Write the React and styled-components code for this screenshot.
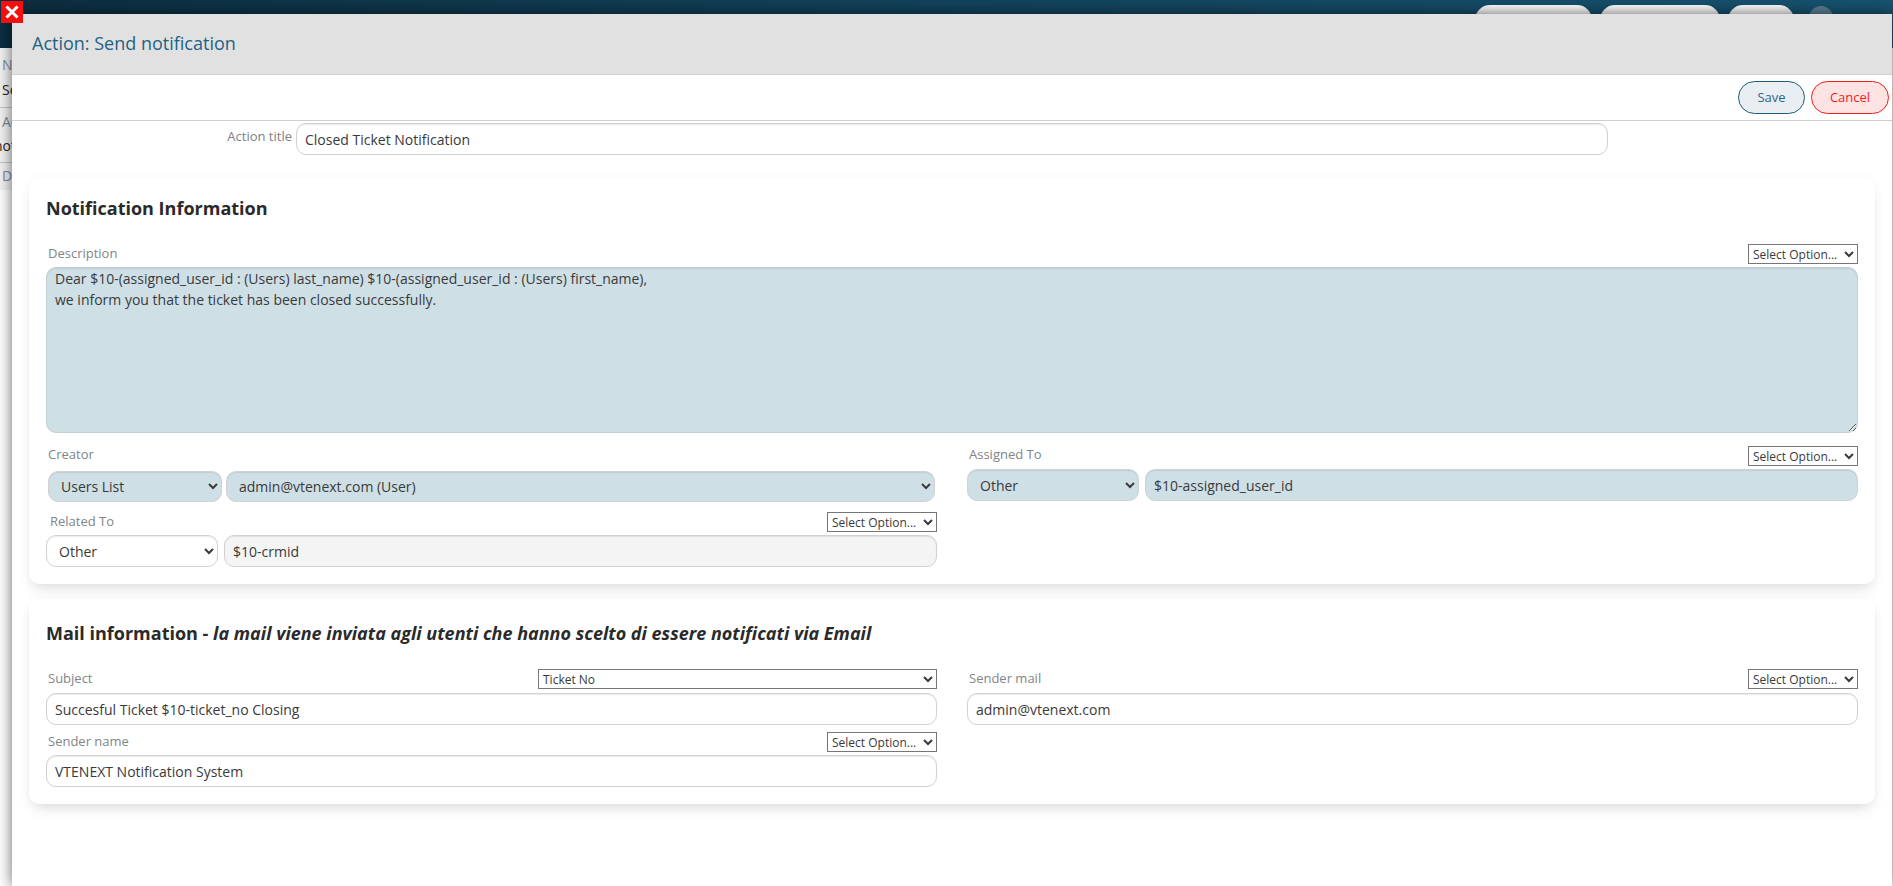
import React from "react";
import styled, { createGlobalStyle } from "styled-components";

const Global = createGlobalStyle`
  html, body { margin: 0; padding: 0; height: 100%; overflow: hidden; background: #fff; }
  body { font-family: "Open Sans", "Liberation Sans", sans-serif; font-size: 14px; color: #333; }
  #root { height: 100%; }
  * { box-sizing: border-box; }
`;

const Page = styled.div`
  position: relative;
  width: 100%;
  height: 100vh;
  overflow: hidden;
  background: #fff;
`;
const TopBar = styled.div`
  height: 48px;
  background: linear-gradient(90deg, #0c2e40 0%, #12435c 50%, #17526f 100%);
  display: flex;
  justify-content: flex-end;
  align-items: flex-start;
  padding: 5px 60px 0 0;
  gap: 8px;
`;
const TopPill = styled.div`
  width: ${(p) => p.$w}px;
  height: 30px;
  border-radius: 15px;
  background: linear-gradient(#ffffff, #dedede);
`;
const TopAvatar = styled.div`
  width: 24px;
  height: 24px;
  margin-left: 7px;
  margin-top: 1px;
  border-radius: 50%;
  background: #5b7f92;
`;
const SideList = styled.div`
  width: 40px;
  height: 142px;
  background: #f2f2f2;
  overflow: hidden;
`;
const SideItem = styled.div`
  height: ${(p) => p.$h}px;
  padding: ${(p) => p.$pad}px 0 0 2px;
  border-bottom: ${(p) => (p.$last ? "none" : "1px solid #c4c4c4")};
`;
const SideLabel = styled.div`
  font-size: 14px;
  line-height: 20px;
  color: #7d8a96;
  white-space: nowrap;
`;
const SideValue = styled.div`
  font-size: 14px;
  line-height: 20px;
  margin: ${(p) => p.$top}px 0 0 ${(p) => p.$x || 0}px;
  color: #222;
  white-space: nowrap;
`;

const CloseBadge = styled.button`
  position: absolute;
  z-index: 3;
  left: 1px;
  top: 1px;
  width: 22px;
  height: 22px;
  padding: 0;
  border: 0;
  background: #f60f0f;
  display: flex;
  align-items: center;
  justify-content: center;
`;

const Modal = styled.div`
  position: absolute;
  z-index: 2;
  left: 12px;
  right: 1px;
  top: 14px;
  bottom: 0;
  background: #fff;
  box-shadow: 0 0 14px rgba(0, 0, 0, 0.6);
  display: flex;
  flex-direction: column;
`;
const Header = styled.div`
  height: 61px;
  flex: none;
  display: flex;
  align-items: center;
  padding: 0 0 2px 20px;
  background: #e1e1e1;
  border-bottom: 1px solid #cfcfcf;
`;
const Title = styled.h1`
  margin: 0;
  font-size: 18px;
  font-weight: 400;
  color: #1d6385;
`;
const Toolbar = styled.div`
  height: 46px;
  flex: none;
  display: flex;
  justify-content: flex-end;
  gap: 6px;
  padding: 6px 3px 0 0;
  border-bottom: 1px solid #cfcfcf;
`;
const Pill = styled.button`
  height: 33px;
  width: ${(p) => p.$w}px;
  border-radius: 17px;
  font: 400 13px "Open Sans", sans-serif;
  padding: 0 0 2px;
  border: 1px solid ${(p) => (p.$danger ? "#f21d1d" : "#1d5a78")};
  background: ${(p) => (p.$danger ? "#ffe3e3" : "#e8eef2")};
  color: ${(p) => (p.$danger ? "#f21d1d" : "#2f6580")};
`;
const TitleRow = styled.div`
  flex: none;
  display: flex;
  gap: 4px;
  padding-top: 2px;
  height: 57px;
`;
const TitleLabel = styled.label`
  width: 280px;
  text-align: right;
  font-size: 13px;
  line-height: 26px;
  color: #7a7f85;
`;
const Body = styled.div`
  padding: 0 17px;
  display: flex;
  flex-direction: column;
  gap: 15px;
`;
const Card = styled.section`
  background: #fff;
  border-radius: 10px;
  box-shadow: 0 8px 14px -4px rgba(0, 0, 0, 0.13), 0 0 10px rgba(0, 0, 0, 0.035);
  padding: ${(p) => p.$top}px 17px 17px;
`;
const CardTitle = styled.h2`
  margin: 0 0 ${(p) => p.$gap}px;
  font-size: 18px;
  line-height: 24px;
  font-weight: 700;
  color: #2a2a2a;
  em { font-weight: 700; font-style: italic; }
`;
const Columns = styled.div`
  display: grid;
  grid-template-columns: 891px 891px;
  column-gap: 30px;
  margin-top: ${(p) => p.$top || 0}px;
`;
const Stack = styled.div`
  display: flex;
  flex-direction: column;
  gap: ${(p) => p.$gap}px;
`;
const Field = styled.div``;
const FieldHead = styled.div`
  height: 20px;
  margin-bottom: ${(p) => p.$gap ?? 3}px;
  display: flex;
  align-items: center;
  justify-content: space-between;
  gap: 20px;
`;
const FieldLabel = styled.label`
  font-size: 13px;
  line-height: 20px;
  margin-left: ${(p) => p.$x ?? 2}px;
  margin-bottom: ${(p) => p.$up ?? 2}px;
  color: #80858a;
`;
const MiniSelect = styled.select`
  width: ${(p) => p.$w || 110}px;
  height: 20px;
  font: 400 12px "Open Sans", sans-serif;
  color: #3a3a3a;
  background: #fff;
  border: 1px solid #767676;
  border-radius: 0;
  padding: 0;
`;
const controlBase = `
  font: 400 14px "Open Sans", sans-serif;
  color: #3a3a3a;
  border: 1px solid #d2d2d2;
  border-radius: 10px;
  outline: 0;
  box-shadow: inset 0 1px 1px rgba(0, 0, 0, 0.08);
`;
const BLUE = "#cfdfe6";
const TextBox = styled.input`
  ${controlBase}
  display: block;
  width: ${(p) => p.$w || "100%"};
  height: 32px;
  padding: 0 8px;
  flex: ${(p) => (p.$grow ? 1 : "none")};
  min-width: 0;
  background: ${(p) => (p.$fill === "blue" ? BLUE : p.$fill === "gray" ? "#f4f4f4" : "#fff")};
`;
const Area = styled.textarea`
  ${controlBase}
  display: block;
  width: 100%;
  height: 166px;
  padding: 0 8px;
  line-height: 21px;
  background: ${BLUE};
  border-color: #c3d0d6;
`;
const Picker = styled.select`
  ${controlBase}
  height: ${(p) => p.$h || 32}px;
  width: ${(p) => p.$w || "auto"};
  flex: ${(p) => (p.$grow ? 1 : "none")};
  min-width: 0;
  padding: 0 8px;
  background: ${(p) => (p.$fill ? BLUE : "#fff")};
`;
const Line = styled.div`
  display: flex;
  gap: ${(p) => p.$gap}px;
  margin: ${(p) => p.$m || "0"};
`;

const OPT = "Select Option...";
const MiniOpt = ({ w, label = OPT }) => (
  <MiniSelect $w={w} defaultValue={label}>
    <option>{label}</option>
  </MiniSelect>
);

export default function App() {
  return (
    <Page>
      <Global />
      <TopBar>
        <TopPill $w={117} />
        <TopPill $w={120} />
        <TopPill $w={66} />
        <TopAvatar />
      </TopBar>
      <SideList>
        <SideItem $h={60} $pad={7}>
          <SideLabel>Name</SideLabel>
          <SideValue $top={5}>Send</SideValue>
        </SideItem>
        <SideItem $h={55} $pad={4}>
          <SideLabel>Action</SideLabel>
          <SideValue $top={4} $x={-8}>notify</SideValue>
        </SideItem>
        <SideItem $h={27} $pad={3} $last>
          <SideLabel>Description</SideLabel>
        </SideItem>
      </SideList>

      <CloseBadge aria-label="Close">
        <svg width="16" height="16" viewBox="0 0 16 16">
          <path d="M2.5 2.5 L13.5 13.5 M13.5 2.5 L2.5 13.5" stroke="#fff" strokeWidth="3" fill="none" />
        </svg>
      </CloseBadge>

      <Modal>
        <Header>
          <Title>Action: Send notification</Title>
        </Header>
        <Toolbar>
          <Pill $w={67}>Save</Pill>
          <Pill $w={78} $danger>Cancel</Pill>
        </Toolbar>
        <TitleRow>
          <TitleLabel>Action title</TitleLabel>
          <TextBox $w="1312px" defaultValue="Closed Ticket Notification" />
        </TitleRow>
        <Body>
          <Card $top={18}>
            <CardTitle $gap={24}>Notification Information</CardTitle>
            <FieldHead>
              <FieldLabel>Description</FieldLabel>
              <MiniOpt />
            </FieldHead>
            <Area
              readOnly
              defaultValue={"Dear $10-(assigned_user_id : (Users) last_name) $10-(assigned_user_id : (Users) first_name),\nwe inform you that the ticket has been closed successfully."}
            />
            <Columns $top={13}>
              <Stack $gap={10}>
                <Field>
                  <FieldHead>
                    <FieldLabel $up={4}>Creator</FieldLabel>
                  </FieldHead>
                  <Line $gap={4} $m="5px 0 0 2px">
                    <Picker $w="174px" $h={31} $fill defaultValue="Users List">
                      <option>Users List</option>
                    </Picker>
                    <Picker $grow $h={31} $fill style={{ marginRight: 2 }} defaultValue="admin">
                      <option value="admin">admin@vtenext.com (User)</option>
                    </Picker>
                  </Line>
                </Field>
                <Field>
                  <FieldHead>
                    <FieldLabel $x={4}>Related To</FieldLabel>
                    <MiniOpt />
                  </FieldHead>
                  <Line $gap={6}>
                    <Picker $w="172px" defaultValue="Other">
                      <option>Other</option>
                    </Picker>
                    <TextBox $grow $fill="gray" defaultValue="$10-crmid" />
                  </Line>
                </Field>
              </Stack>
              <Field>
                <FieldHead>
                  <FieldLabel $up={4}>Assigned To</FieldLabel>
                  <MiniOpt />
                </FieldHead>
                <Line $gap={6}>
                  <Picker $w="172px" $fill defaultValue="Other">
                    <option>Other</option>
                  </Picker>
                  <TextBox $grow $fill="blue" defaultValue="$10-assigned_user_id" />
                </Line>
              </Field>
            </Columns>
          </Card>

          <Card $top={22}>
            <CardTitle $gap={24}>
              Mail information - <em>la mail viene inviata agli utenti che hanno scelto di essere notificati via Email</em>
            </CardTitle>
            <Columns>
              <Stack $gap={7}>
                <Field>
                  <FieldHead $gap={4}>
                    <FieldLabel>Subject</FieldLabel>
                    <MiniOpt w={399} label="Ticket No" />
                  </FieldHead>
                  <TextBox defaultValue="Succesful Ticket $10-ticket_no Closing" />
                </Field>
                <Field>
                  <FieldHead>
                    <FieldLabel>Sender name</FieldLabel>
                    <MiniOpt />
                  </FieldHead>
                  <TextBox defaultValue="VTENEXT Notification System" />
                </Field>
              </Stack>
              <Field>
                <FieldHead $gap={4}>
                  <FieldLabel>Sender mail</FieldLabel>
                  <MiniOpt />
                </FieldHead>
                <TextBox defaultValue="admin@vtenext.com" />
              </Field>
            </Columns>
          </Card>
        </Body>
      </Modal>
    </Page>
  );
}
